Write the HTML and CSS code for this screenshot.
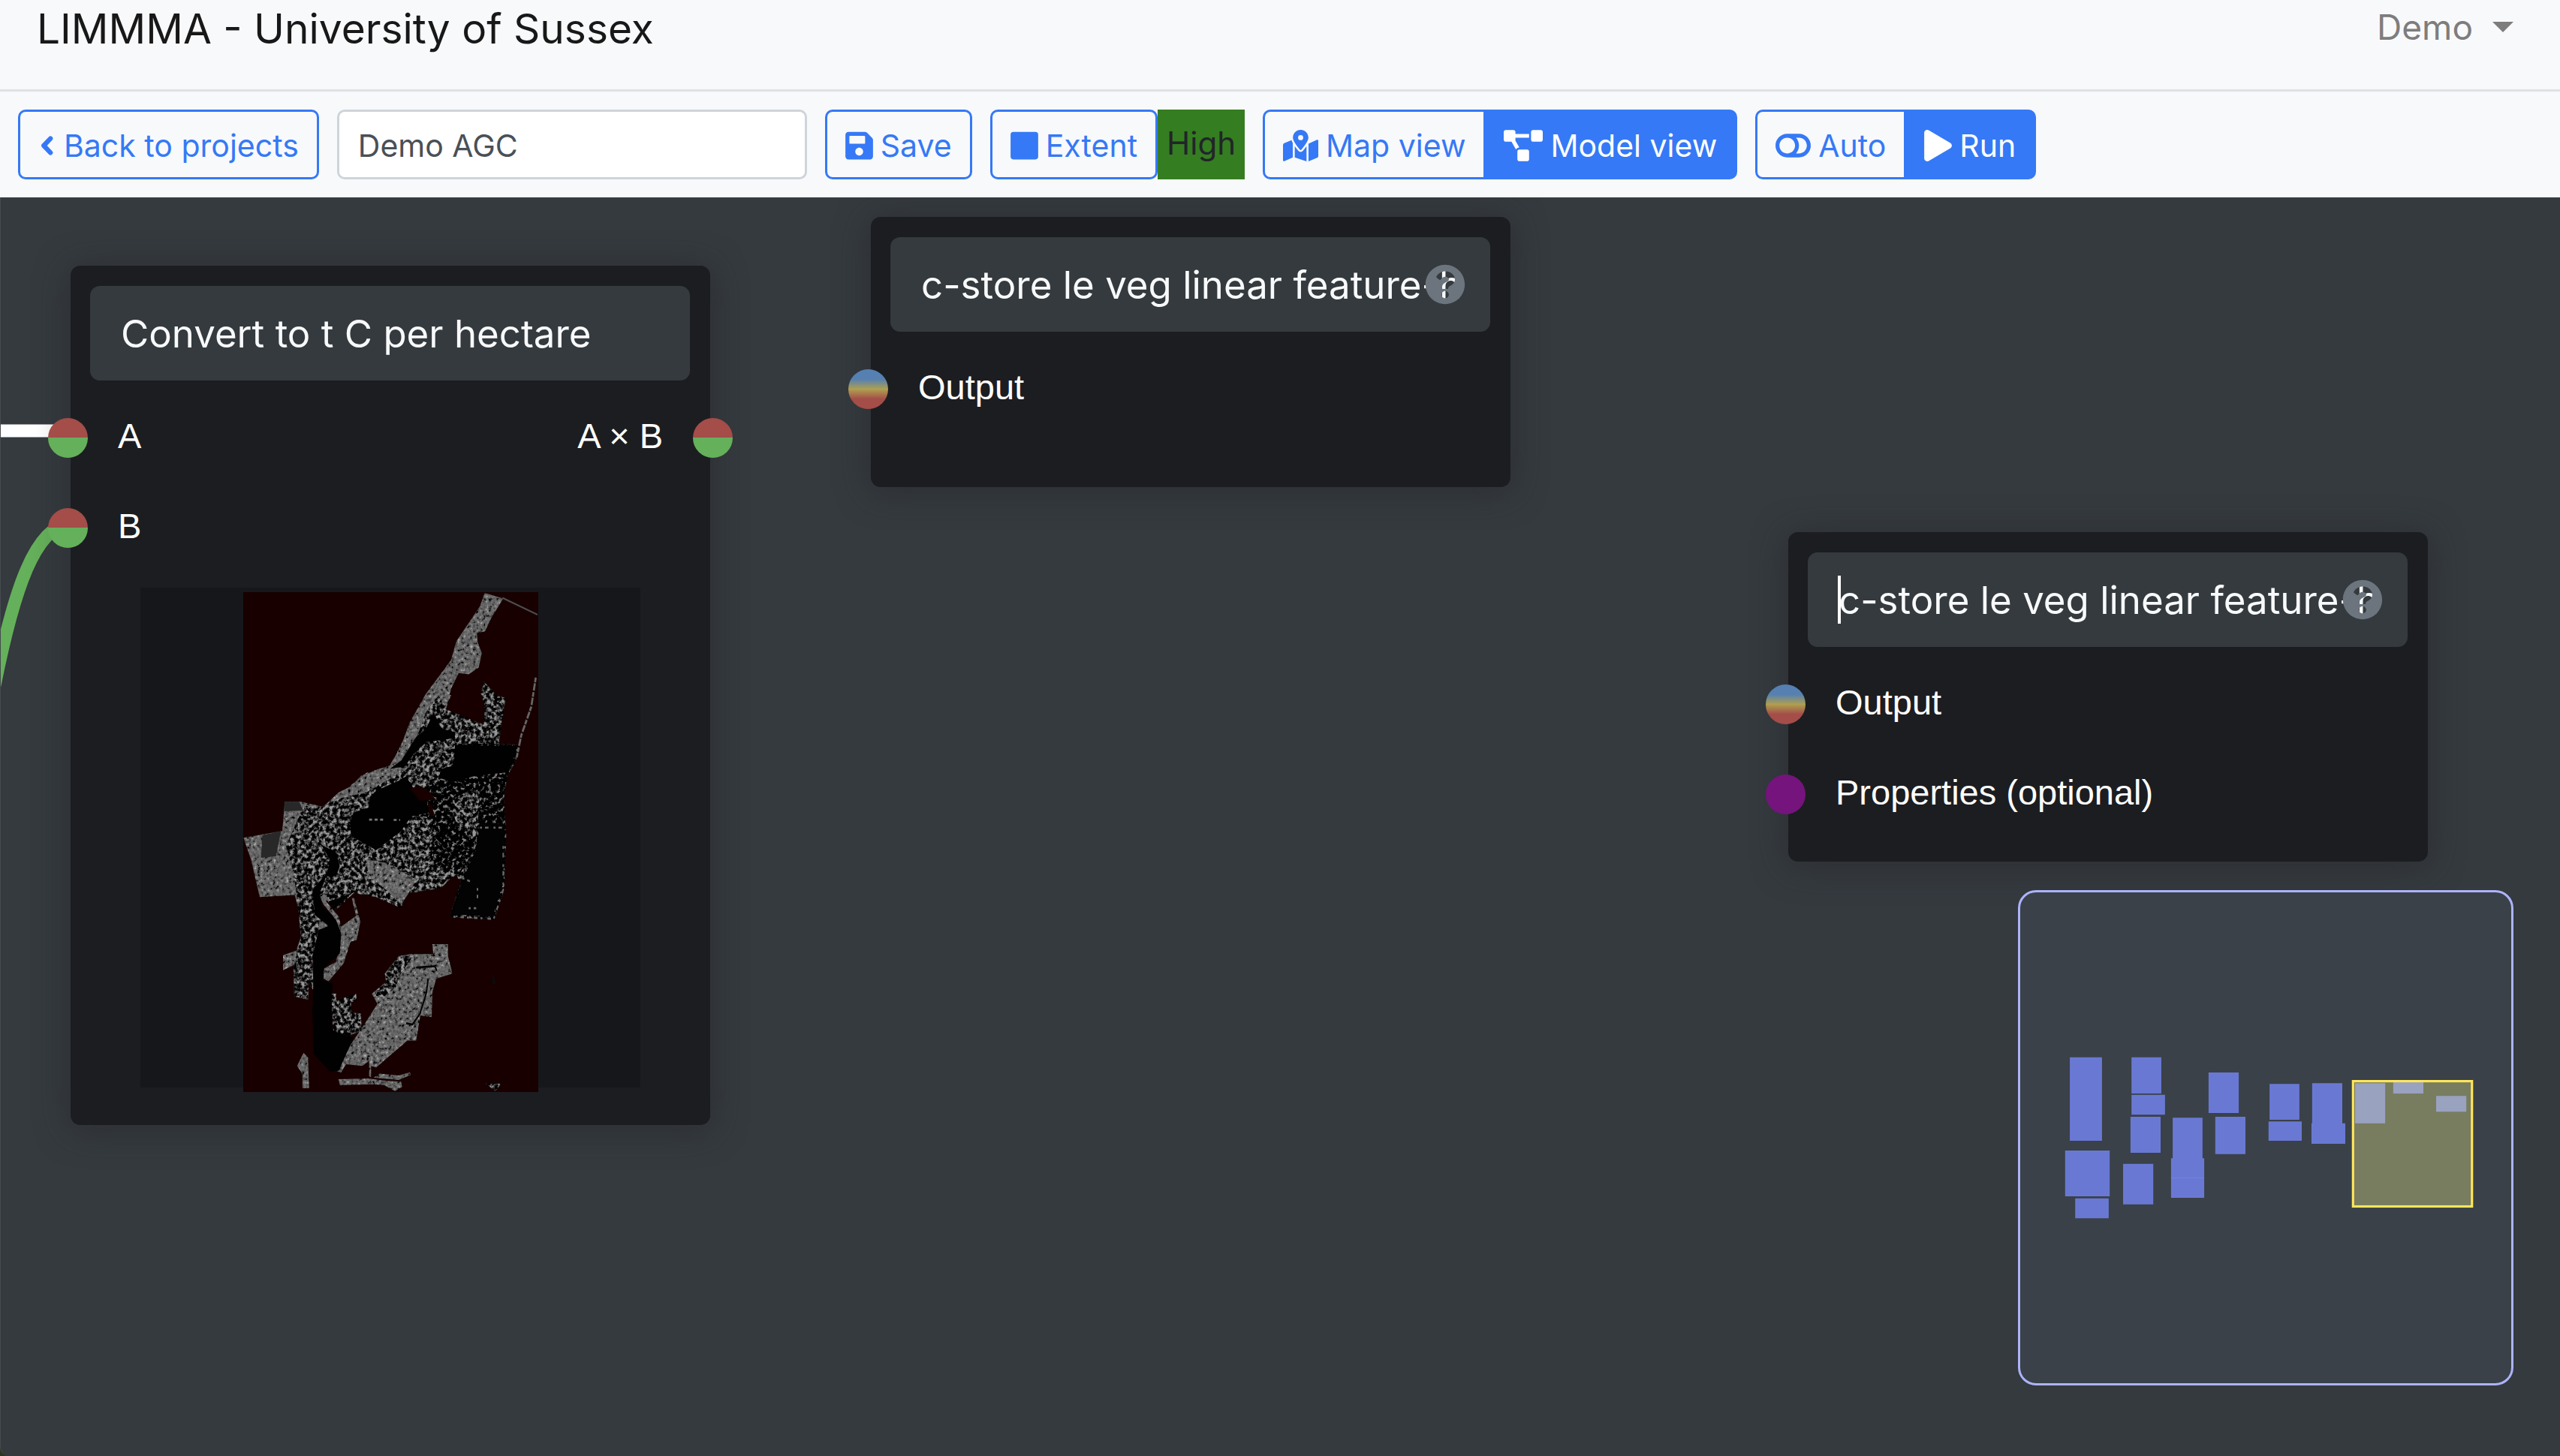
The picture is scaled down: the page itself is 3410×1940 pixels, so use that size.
FILE: index.html
```html
<!DOCTYPE html>
<html lang="en">
<head>
<meta charset="utf-8">
<title>LIMMMA - University of Sussex</title>
<link rel="stylesheet" href="styles.css">
</head>
<body>
<header class="navbar">
  <a class="brand" href="#">LIMMMA - University of Sussex</a>
  <button class="user-menu" type="button">Demo <span class="caret"></span></button>
</header>
<div class="toolbar">
  <a class="btn" href="#"><svg class="icon icon-narrow" viewBox="0 0 22 40" aria-hidden="true"><path d="M15 11 6.500 20 15 29" fill="none" stroke="currentColor" stroke-width="6" stroke-linecap="round" stroke-linejoin="round"/></svg>Back to projects</a>
  <input class="project-name" type="text" value="Demo AGC" aria-label="Project name">
  <button class="btn" type="button"><svg class="icon" viewBox="0 0 448 512" aria-hidden="true"><path fill-rule="evenodd" d="M433.900 129.900l-83.900-83.900A48 48 0 0 0 316.100 32H48C21.500 32 0 53.500 0 80v352c0 26.500 21.500 48 48 48h352c26.500 0 48-21.500 48-48V163.900a48 48 0 0 0-14.100-34zM224 416c-35.300 0-64-28.700-64-64s28.700-64 64-64 64 28.700 64 64-28.700 64-64 64zm96-304.500V212c0 6.600-5.400 12-12 12H76c-6.600 0-12-5.400-12-12V108c0-6.600 5.400-12 12-12h228.500c3.200 0 6.200 1.300 8.500 3.500l3.500 3.500A12 12 0 0 1 320 111.500z" fill="currentColor"/></svg>Save</button>
  <div class="group">
    <button class="btn" type="button"><svg class="icon" viewBox="0 0 448 512" aria-hidden="true"><rect y="32" width="448" height="448" rx="46" fill="currentColor"/></svg>Extent</button>
    <span class="level">High</span>
  </div>
  <div class="group joined">
    <button class="btn" type="button"><svg class="icon icon-wide" viewBox="0 0 576 512" aria-hidden="true"><path fill="currentColor" d="M288 0c-69.600 0-126 56.400-126 126 0 56.300 82.400 158.800 113.900 196 6.400 7.500 17.800 7.500 24.200 0C331.700 284.800 414 182.300 414 126 414 56.400 357.600 0 288 0zm0 168a42 42 0 1 1 0-84 42 42 0 0 1 0 84zM20.100 216A32 32 0 0 0 0 245.700v250.300c0 11.300 11.400 19.100 21.900 14.900L160 448V214.900c-8.800-16-16.100-31.500-21.300-46.400L20.100 216zM288 359.700c-14.100 0-27.400-6.200-36.500-17-19.700-23.200-40.600-49.600-59.500-76.700v182l192 64V266c-18.900 27.100-39.800 53.500-59.500 76.700-9.100 10.800-22.400 17-36.500 17zM554.100 161.200 416 224v288l139.900-56A32 32 0 0 0 576 426.300V176c0-11.300-11.400-19-21.900-14.800z"/></svg>Map view</button>
    <button class="btn active" type="button"><svg class="icon icon-xwide" viewBox="0 0 640 512" aria-hidden="true"><path fill="currentColor" d="M384 320H256c-17.700 0-32 14.300-32 32v128c0 17.700 14.300 32 32 32h128c17.700 0 32-14.300 32-32V352c0-17.700-14.300-32-32-32zM192 32c0-17.700-14.300-32-32-32H32C14.300 0 0 14.300 0 32v128c0 17.700 14.300 32 32 32h95.700l73.200 128c11.100-19 31.600-32 55.100-32h.300L192 175.400V128h224V64H192V32zM608 0H480c-17.700 0-32 14.300-32 32v128c0 17.700 14.300 32 32 32h128c17.700 0 32-14.300 32-32V32c0-17.700-14.300-32-32-32z"/></svg>Model view</button>
  </div>
  <div class="group joined">
    <button class="btn" type="button"><svg class="icon icon-wide" viewBox="0 0 576 512" aria-hidden="true"><path fill="currentColor" fill-rule="evenodd" d="M384 64H192C86 64 0 150 0 256s86 192 192 192h192c106 0 192-86 192-192S490 64 384 64zM64 256c0-70.700 57.200-128 128-128 70.700 0 128 57.200 128 128 0 70.700-57.200 128-128 128-70.700 0-128-57.200-128-128zm320 128h-48.900c65.200-72.900 65-183.200 0-256H384c70.700 0 128 57.200 128 128 0 70.700-57.200 128-128 128z"/></svg>Auto</button>
    <button class="btn active" type="button"><svg class="icon" viewBox="0 0 448 512" aria-hidden="true"><path fill="currentColor" d="M424.400 214.700 72.400 6.600C43.800-10.300 0 6.100 0 47.900V464c0 37.500 40.700 60.100 72.400 41.300l352-208c31.400-18.500 31.500-64.100 0-82.600z"/></svg>Run</button>
  </div>
</div>
<main class="canvas">
  <svg class="links" aria-hidden="true">
    <path class="link link-white" d="M0 311H90"/>
    <path class="link link-green" d="M92 434C46 440 18 520 -8 650"/>
  </svg>

  <section class="node node-convert">
    <input class="node-title" type="text" value="Convert to t C per hectare" aria-label="Node name">
    <div class="row"><span class="socket split"></span><span>A</span><span class="out">A × B</span><span class="socket socket-out split"></span></div>
    <div class="row"><span class="socket split"></span><span>B</span></div>
    <div class="preview">
      <svg class="raster" viewBox="69 43 1179 1490" preserveAspectRatio="none" role="img" aria-label="Raster preview">
        <defs>
          <filter id="light" x="0" y="0" width="1" height="1" color-interpolation-filters="sRGB">
            <feTurbulence type="fractalNoise" baseFrequency=".08 .1" numOctaves="3" seed="4"/>
            <feColorMatrix values="1.700 0 0 0 -.35  1.700 0 0 0 -.35  1.700 0 0 0 -.35  0 0 0 0 1"/>
            <feComponentTransfer><feFuncR type="table" tableValues="0 .26 .37 .42 .47 .66"/><feFuncG type="table" tableValues="0 .26 .37 .42 .47 .66"/><feFuncB type="table" tableValues="0 .26 .37 .42 .47 .66"/></feComponentTransfer>
            <feComposite in2="SourceAlpha" operator="in"/>
          </filter>
          <filter id="mixed" x="0" y="0" width="1" height="1" color-interpolation-filters="sRGB">
            <feTurbulence type="fractalNoise" baseFrequency=".07 .09" numOctaves="4" seed="9"/>
            <feColorMatrix values="3 0 0 0 -1.050  3 0 0 0 -1.050  3 0 0 0 -1.050  0 0 0 0 1"/>
            <feComponentTransfer><feFuncR type="table" tableValues="0 .03 .14 .34 .4 .6"/><feFuncG type="table" tableValues="0 .03 .14 .34 .4 .6"/><feFuncB type="table" tableValues="0 .03 .14 .34 .4 .6"/></feComponentTransfer>
            <feComposite in2="SourceAlpha" operator="in"/>
          </filter>
          <filter id="dark" x="0" y="0" width="1" height="1" color-interpolation-filters="sRGB">
            <feTurbulence type="fractalNoise" baseFrequency=".07 .09" numOctaves="4" seed="2"/>
            <feColorMatrix values="3 0 0 0 -1.150  3 0 0 0 -1.150  3 0 0 0 -1.150  0 0 0 0 1"/>
            <feComponentTransfer><feFuncR type="table" tableValues="0 0 0 .1 .32 .5"/><feFuncG type="table" tableValues="0 0 0 .1 .32 .5"/><feFuncB type="table" tableValues="0 0 0 .1 .32 .5"/></feComponentTransfer>
            <feComposite in2="SourceAlpha" operator="in"/>
          </filter>
        </defs>
        <rect x="69" y="43" width="1179" height="1490" fill="#180000"/>
        <path filter="url(#mixed)" d="M388 683 480 630 560 582 655 560 720 470 760 400 800 345 900 350 878 392 1030 438 1034 380 1018 345 1030 310 1085 352 1118 358 1090 495 1168 498 1160 545 1125 590 1110 660 1120 760 1112 930 1072 1020 895 1010 940 900 905 890 860 925 720 942 700 985 600 952 510 940 440 990 372 940 405 880 360 840 380 780z"/>
        <path filter="url(#dark)" d="M1040 495 1168 498 1158 545 1125 590 1110 660 1120 760 1112 930 1072 1020 895 1010 940 900 1000 800 1015 640 910 600 900 560 920 495z"/>
        <path filter="url(#dark)" d="M835 600 1010 620 905 660 915 720 1000 800 930 890 830 850 820 720 740 705 780 660z"/>
        <path fill="#030303" d="M1015 730 1114 735 1108 910 1066 1010 905 1004 945 900 1000 810z"/>
        <path fill="none" stroke="#6a6a6a" stroke-width="6" stroke-dasharray="8 12 14 20" d="M1108 800 1108 930 1070 1017 900 1010M945 895 975 905M1005 925V955M970 985H1000M1015 745H1110M1055 600V640"/>
        <path filter="url(#light)" d="M1034 45 1108 62 1060 120 1035 160 1003 165 1005 190 1022 225 1010 268 970 288 930 284 900 330 878 392 850 350 800 400 760 480 690 560 655 560 700 500 735 430 800 345 860 285 900 245 920 190 1015 85z"/>
        <path filter="url(#light)" d="M655 560 720 570 560 640 480 690 430 690 390 760 410 830 395 890 350 930 350 960 375 1010 410 1040 370 1050 345 1130 350 1230 330 1205 328 1258 273 1248 270 1155 228 1170 228 1125 280 1112 300 1070 295 1000 275 946 135 952 100 840 70 775 225 755 235 668 300 668 388 683 450 640 500 622 540 590z"/>
        <path filter="url(#mixed)" d="M310 680 388 683 440 660 560 640 490 700 430 720 380 790 410 840 395 890 345 930 375 1010 370 1050 345 1130 350 1230 330 1205 328 1258 273 1248 270 1160 300 1070 285 960 270 880 240 800z"/>
        <path filter="url(#light)" d="M560 840 640 850 760 900 730 940 700 975 640 930 570 890z"/>
        <path filter="url(#light)" d="M372 945 405 935 400 965 450 1010 460 1040 520 1008 503 955 512 955 537 1025 522 1080 498 1085 470 1150 410 1203 390 1195 392 1165 440 1145 460 1070 430 1010 390 975z"/>
        <path filter="url(#light)" d="M825 1092 887 1092 888 1130 905 1180 840 1195 825 1235 822 1310 777 1305 760 1380 725 1380 600 1460 580 1455 580 1490 572 1485 572 1440 545 1455 480 1450 460 1475 440 1470 500 1390 550 1335 605 1270 583 1240 640 1205 635 1180 690 1128 740 1122 828 1122z"/>
        <path filter="url(#mixed)" d="M690 1130 750 1125 690 1190 680 1220 630 1250 585 1245 640 1205 635 1180z"/>
        <path fill="none" stroke="#050505" stroke-width="6" d="M760 1162 835 1158 842 1172M808 1195 800 1240 775 1300 745 1332 720 1328"/>
        <path filter="url(#mixed)" d="M405 1240 440 1240 440 1260 520 1240 522 1262 500 1265 500 1295 540 1300 542 1350 470 1372 430 1360 422 1280z"/>
        <path filter="url(#light)" d="M310 1416 328 1430 332 1522 306 1522 305 1478 284 1455zM450 1495 570 1493 620 1498 700 1502 704 1518 675 1530 630 1512 580 1510 455 1513zM590 1490 615 1478 690 1484 735 1474 738 1482 690 1497 650 1494z"/>
        <path filter="url(#mixed)" d="M1038 1508h62l-24 22z"/>
        <path fill="#0b0b0b" d="M1064 1178 1080 1210 1064 1210z"/>
        <path fill="#010101" d="M720 592 775 660 805 665 805 700 740 712 700 755 600 812 500 770 495 730 510 700 570 685 575 655 600 635 690 605zM655 570 700 545 760 475 800 450 830 400 860 450 915 460 915 478 800 490 750 525 715 562zM915 498 1165 502 1130 580 1000 590 900 610 850 595 860 570 910 560zM380 795 440 820 455 860 440 890 400 890 375 940 385 980 440 1020 460 1060 455 1120 390 1165 390 1200 428 1210 422 1240 425 1350 510 1372 450 1470 415 1472 352 1420 345 1290 352 1150 345 1130 372 1050 410 1038 355 1005 345 930 405 880 415 840zM410 965 500 942 430 990z"/>
        <path fill="#282828" d="M233 668h60l15 26-75 2zM145 768 220 755 200 830 140 835z"/>
        <path fill="#180000" d="M735 628 775 620 810 635 838 662 775 665zM805 668 825 680 830 710 815 710z"/>
        <path fill="none" stroke="#4d4d4d" stroke-width="5" d="M1105 60 1245 110"/>
        <path fill="none" stroke="#666" stroke-width="8" stroke-dasharray="14 3 22 5" d="M1238 298 1220 385 1180 470 1162 535"/>
        <path fill="none" stroke="#777" stroke-width="6" stroke-dasharray="12 10" d="M572 721H630M670 722H696"/>
      </svg>
    </div>
  </section>

  <section class="node node-output">
    <div class="title-wrap">
      <input class="node-title" type="text" value="c-store le veg linear feature-hedgerow" aria-label="Node name">
      <svg class="help" viewBox="0 0 512 512" role="img" aria-label="Help"><path fill="#6c757d" d="M504 256c0 137-111 248-248 248S8 393 8 256C8 119.100 119 8 256 8s248 111.100 248 248zM262.700 90c-54.500 0-89.300 23-116.500 63.800-3.500 5.300-2.400 12.400 2.700 16.300l34.700 26.300c5.200 3.900 12.600 3 16.700-2.100 17.900-22.700 30.100-35.800 57.300-35.800 20.400 0 45.700 13.100 45.700 33 0 15-12.400 22.700-32.500 34C247.100 238.500 216 254.900 216 296v4c0 6.600 5.400 12 12 12h56c6.600 0 12-5.400 12-12v-1.300c0-28.500 83.200-29.600 83.200-106.700 0-58-60.200-102-116.500-102zM256 338c-25.400 0-46 20.600-46 46 0 25.400 20.600 46 46 46s46-20.600 46-46c0-25.400-20.600-46-46-46z"/></svg>
    </div>
    <div class="row"><span class="socket spectrum"></span><span>Output</span></div>
  </section>

  <section class="node node-properties">
    <div class="title-wrap">
      <input class="node-title" type="text" value="c-store le veg linear feature-hedgerow" aria-label="Node name">
      <span class="text-cursor"></span>
      <svg class="help" viewBox="0 0 512 512" role="img" aria-label="Help"><path fill="#6c757d" d="M504 256c0 137-111 248-248 248S8 393 8 256C8 119.100 119 8 256 8s248 111.100 248 248zM262.700 90c-54.500 0-89.300 23-116.500 63.800-3.500 5.300-2.400 12.400 2.700 16.300l34.700 26.300c5.200 3.900 12.600 3 16.700-2.100 17.900-22.700 30.100-35.800 57.300-35.800 20.400 0 45.700 13.100 45.700 33 0 15-12.400 22.700-32.500 34C247.100 238.500 216 254.900 216 296v4c0 6.600 5.400 12 12 12h56c6.600 0 12-5.400 12-12v-1.300c0-28.500 83.200-29.600 83.200-106.700 0-58-60.200-102-116.500-102zM256 338c-25.400 0-46 20.600-46 46 0 25.400 20.600 46 46 46s46-20.600 46-46c0-25.400-20.600-46-46-46z"/></svg>
    </div>
    <div class="row"><span class="socket spectrum"></span><span>Output</span></div>
    <div class="row"><span class="socket purple"></span><span>Properties (optional)</span></div>
  </section>

  <div class="minimap">
    <svg viewBox="47 43 1465 1464" role="img" aria-label="Minimap">
      <g fill="#6979d3">
        <path d="M195 535h96v249h-96zM181 813h133v137H181zM211 956h100v59H211zM379 535h89v108h-89zM379 647h100v59H379zM376 712h90v108h-90zM354 853h90v121h-90zM502 715h89v121h-89zM497 836h99v118h-99zM609 580h90v121h-90zM629 712h90v112h-90zM791 614h89v107h-89zM788 726h99v58h-99zM918 612h90v120h-90zM916 732h101v61H916z"/>
      </g>
      <path d="M497 895h99" stroke="#7484ee" stroke-width="2"/>
      <rect x="1040" y="606" width="355" height="374" fill="#787d60"/>
      <path fill="#99a2bf" d="M1046 612h90v120h-90zM1160 606h90v37h-90zM1288 650h90v47h-90z"/>
      <rect x="1040" y="606" width="355" height="374" fill="none" stroke="#ffe65a" stroke-width="7"/>
    </svg>
  </div>
</main>
</body>
</html>
```
FILE: styles.css
```css
* { box-sizing: border-box; }

body {
  margin: 0;
  min-height: 100vh;
  display: flex;
  flex-direction: column;
  background: #2b3620;
  color: #212529;
  font: 41px/60px Inter, "Liberation Sans", sans-serif;
}

a { text-decoration: none; }
button, input { font: inherit; }

.navbar {
  display: flex;
  justify-content: space-between;
  align-items: flex-start;
  height: 122px;
  padding: 0 62px 0 49px;
  background: #f8f9fb;
  border-bottom: 3px solid #dee2e6;
}

.brand {
  color: #181818;
  font-size: 55px;
  line-height: 76px;
}

.user-menu {
  display: flex;
  align-items: center;
  gap: 26px;
  padding: 0;
  border: 0;
  background: none;
  color: #7d7d7d;
  font-size: 46px;
  line-height: 72px;
}

.caret {
  border: 14px solid transparent;
  border-top-color: currentColor;
  border-bottom: 0;
}

.toolbar {
  display: flex;
  align-items: center;
  gap: 24px;
  padding: 24px;
  background: #f8f9fb;
}

.btn {
  display: flex;
  align-items: center;
  gap: 10px;
  height: 93px;
  padding: 2px 24px 0;
  border: 3px solid #3579f6;
  border-radius: 10px;
  background: none;
  color: #3579f6;
  white-space: nowrap;
}

.btn.active { background: #3579f6; color: #fff; }

.icon { width: 37px; height: 42px; flex: none; }
.icon-narrow { width: 24px; }
.icon-wide { width: 47px; }
.icon-xwide { width: 52px; }

.project-name {
  width: 626px;
  height: 93px;
  padding: 2px 25px 0;
  border: 3px solid #ced4da;
  border-radius: 10px;
  background: #fff;
  color: #495057;
}

.group { display: flex; }
.joined .btn:first-child { border-right: 0; border-radius: 10px 0 0 10px; }
.joined .btn:last-child { border-radius: 0 10px 10px 0; }

.level {
  padding: 15px 12px 18px;
  background: #357d21;
  font-size: 42px;
}

.canvas {
  position: relative;
  flex: 1;
  overflow: hidden;
  border-left: 1px solid #454b4f;
  border-bottom-left-radius: 12px;
  background: #343a3e;
}

.links {
  position: absolute;
  inset: 0;
  width: 100%;
  height: 100%;
}

.link { fill: none; stroke-width: 17px; }
.link-white { stroke: #fff; }
.link-green { stroke: #65b05a; }

.node {
  position: absolute;
  width: 852px;
  min-height: 360px;
  padding: 27px 0 30px;
  border-radius: 13px;
  background: #1c1d21;
  box-shadow: 0 5px 45px rgba(40, 36, 44, .6);
  color: #fff;
  font: 47px/54px "Liberation Sans", Arial, sans-serif;
}

.node-convert { left: 93px; top: 91px; }
.node-output { left: 1159px; top: 26px; }
.node-properties { left: 2381px; top: 446px; }

.title-wrap { position: relative; }

.node-title {
  display: block;
  width: 799px;
  height: 126px;
  margin: 0 26px 16px;
  padding: 0 40px 0 41px;
  border: 0;
  border-radius: 13px;
  background: #343a3e;
  color: #f8f9fa;
  font: 51px/78px Inter, "Liberation Sans", sans-serif;
}

.help {
  position: absolute;
  right: 60px;
  top: 36px;
  width: 54px;
  height: 54px;
}

.text-cursor {
  position: absolute;
  left: 66px;
  top: 31px;
  width: 4px;
  height: 64px;
  background: #fff;
}

.row {
  position: relative;
  display: flex;
  justify-content: space-between;
  align-items: center;
  height: 120px;
  padding: 0 63px 4px;
}

.socket {
  position: absolute;
  left: -30px;
  top: 34px;
  width: 53px;
  height: 53px;
  border-radius: 50%;
}

.socket-out { left: auto; right: -30px; }
.split { background: linear-gradient(#a44d49 50%, #65b05a 50%); }
.spectrum { background: linear-gradient(#5580b1 25%, #af9f50 50%, #a44d49 75%); }
.purple { background: #75147c; }

.preview {
  display: flex;
  justify-content: center;
  width: 666px;
  height: 666px;
  margin: 20px auto;
  background: #15171b;
}

.raster { width: 393px; height: 666px; margin-top: 6px; }

.minimap {
  position: absolute;
  right: 62px;
  bottom: 94px;
  width: 660px;
  height: 660px;
  border: 3px solid #acb3f9;
  border-radius: 24px;
  background: #3a4148;
}

.minimap svg { display: block; width: 100%; height: 100%; }
```
